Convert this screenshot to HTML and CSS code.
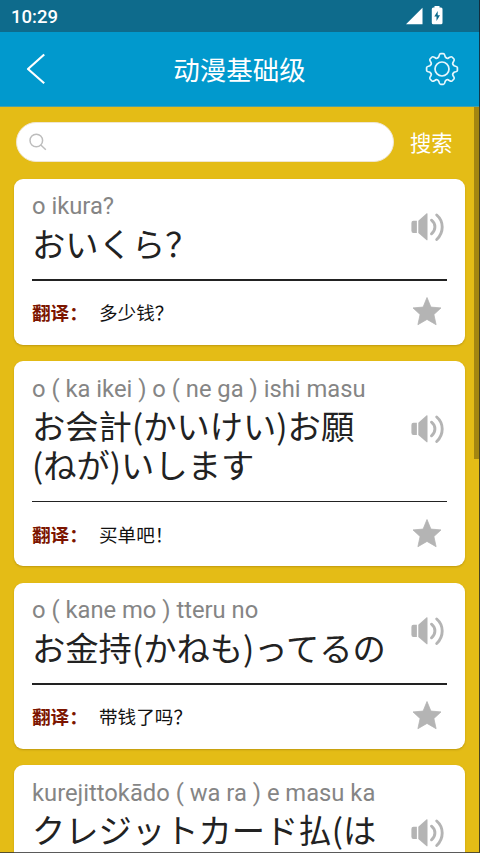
FILE: index.html
```
<!DOCTYPE html>
<html lang="zh-CN">
<head>
<meta charset="utf-8">
<title>动漫基础级</title>
<link rel="stylesheet" href="styles.css">
</head>
<body>
<svg width="0" height="0" class="defs">
  <symbol id="speaker" viewBox="0 0 34 30">
    <path d="M2.400 8.700H5.900V21H2.400Q.4 21 .4 18.800V10.900Q.4 8.700 2.400 8.700Z" fill="#b4b4b4"/>
    <path d="M7.300 8.700L15.700 1.300Q16.500 .9 16.500 1.800V27.700Q16.500 28.600 15.700 28.200L7.300 21Z" fill="#b4b4b4"/>
    <path d="M20.500 8.200Q23.900 10.800 23.900 15T20.500 21.800M25.700 3Q31.200 7.700 31.200 15T25.700 27.500" fill="none" stroke="#b4b4b4" stroke-width="2.900" stroke-linecap="round"/>
  </symbol>
  <symbol id="star" viewBox="0 0 30 30">
    <path d="M15 1.500L18.900 11.100L29 11.900L21.900 18.500L24.100 28.700L15 23.400L5.900 28.700L8.100 18.500L1 11.900L11.100 11.100Z" fill="#b4b4b4" stroke="#b4b4b4" stroke-width=".8" stroke-linejoin="round"/>
  </symbol>
</svg>
<div class="screen">
  <div class="status">
    <span class="clock">10:29</span>
    <svg class="status-icons" width="38" height="20" viewBox="0 0 38 20">
      <path d="M0 18.200L16.500 1.700V18.200Z" fill="#fff"/>
      <path d="M28.500 0H33.500V1.500H35Q36.500 1.500 36.500 3V16.700Q36.500 18.200 35 18.200H27.300Q25.800 18.200 25.800 16.700V3Q25.800 1.500 27.300 1.500H28.500Z" fill="#fff"/>
      <path d="M31.700 5L28.300 10.600H30.500V15L34 9.200H31.700Z" fill="#0e6b8c"/>
    </svg>
  </div>
  <header class="header">
    <svg class="back" width="20" height="32" viewBox="0 0 20 32"><path d="M18.200 1.500L2 16L18.200 30.300" fill="none" stroke="#fff" stroke-width="2.200" stroke-linejoin="round"/></svg>
    <h1 class="title">动漫基础级</h1>
    <svg class="gear" width="34" height="34" viewBox="-17 -17 34 34" fill="none" stroke="#e6f6fc" stroke-width="1.700" stroke-linejoin="round">
      <circle r="7"/>
      <path d="M-3.200-12.200C-2.700-14.300-2.600-15.400-1.400-15.400H1.400C2.600-15.400 2.700-14.300 3.200-12.200C4.200-10.700 5.500-10.500 6.400-10.900C8.200-12 9.100-12.900 10-12L12-10C12.900-9.100 12-8.200 10.900-6.400C10.500-5.500 10.700-4.200 12.200-3.200C14.300-2.700 15.400-2.600 15.400-1.400V1.400C15.400 2.600 14.300 2.700 12.200 3.200C10.700 4.200 10.500 5.500 10.900 6.400C12 8.200 12.900 9.100 12 10L10 12C9.100 12.900 8.200 12 6.400 10.900C5.500 10.500 4.200 10.700 3.200 12.200C2.700 14.300 2.600 15.400 1.400 15.400H-1.400C-2.600 15.400-2.700 14.300-3.200 12.200C-4.200 10.700-5.500 10.500-6.400 10.900C-8.200 12-9.100 12.900-10 12L-12 10C-12.900 9.100-12 8.200-10.900 6.400C-10.500 5.500-10.700 4.200-12.200 3.200C-14.300 2.700-15.400 2.600-15.400 1.400V-1.400C-15.400-2.600-14.300-2.700-12.200-3.200C-10.700-4.200-10.500-5.500-10.900-6.400C-12-8.200-12.900-9.100-12-10L-10-12C-9.100-12.900-8.200-12-6.400-10.900C-5.500-10.500-4.200-10.700-3.200-12.200Z"/>
    </svg>
  </header>
  <main class="content">
    <div class="search">
      <div class="search-box">
        <svg width="18" height="18" viewBox="0 0 18 18" fill="none" stroke="#bdbdbd" stroke-width="1.500"><circle cx="7.300" cy="7.500" r="6.300"/><path d="M11.800 12L16.800 16.700"/></svg>
      </div>
      <span class="search-label">搜索</span>
    </div>
    <div class="cards">
      <article class="card">
        <div class="phrase">
          <div class="words"><p class="romaji">o ikura?</p><p class="japanese">おいくら？</p></div>
          <svg class="speaker"><use href="#speaker"/></svg>
        </div>
        <div class="meaning"><b class="label">翻译：</b><span class="chinese">多少钱？</span><svg class="star"><use href="#star"/></svg></div>
      </article>
      <article class="card">
        <div class="phrase thin">
          <div class="words"><p class="romaji">o ( ka ikei ) o ( ne ga ) ishi masu</p><p class="japanese">お会計(かいけい)お願<br>(ねが)いします</p></div>
          <svg class="speaker"><use href="#speaker"/></svg>
        </div>
        <div class="meaning"><b class="label">翻译：</b><span class="chinese">买单吧！</span><svg class="star"><use href="#star"/></svg></div>
      </article>
      <article class="card">
        <div class="phrase">
          <div class="words"><p class="romaji">o ( kane mo ) tteru no</p><p class="japanese">お金持(かねも)ってるの</p></div>
          <svg class="speaker"><use href="#speaker"/></svg>
        </div>
        <div class="meaning"><b class="label">翻译：</b><span class="chinese">带钱了吗？</span><svg class="star"><use href="#star"/></svg></div>
      </article>
      <article class="card">
        <div class="phrase two-line">
          <div class="words"><p class="romaji">kurejittokādo ( wa ra ) e masu ka</p><p class="japanese">クレジットカード払(は</p></div>
          <svg class="speaker"><use href="#speaker"/></svg>
        </div>
      </article>
    </div>
    <div class="scrollbar"></div>
  </main>
  <div class="edge"></div>
</div>
</body>
</html>
```

FILE: styles.css
```
* { box-sizing: border-box; }
html, body { height: 100%; overflow: hidden; }
body { margin: 0; font-family: "Noto Sans CJK SC", sans-serif; }
p, h1 { margin: 0; }
.defs { position: absolute; }

.screen {
  position: relative;
  display: flex;
  flex-direction: column;
  width: 480px;
  height: 853px;
  overflow: hidden;
}
.edge {
  position: absolute;
  inset: 0;
  border-right: 1px solid rgba(20, 25, 35, .75);
  border-bottom: 1px solid rgba(50, 50, 50, .8);
}

.status {
  display: flex;
  flex: none;
  align-items: center;
  justify-content: space-between;
  height: 32px;
  padding: 0 36.500px 0 11px;
  background: #0e6b8c;
}
.clock { color: #fff; font: 500 18.500px/32px Roboto, sans-serif; padding-top: 1px; }

.header {
  display: flex;
  flex: none;
  align-items: center;
  justify-content: space-between;
  height: 75px;
  padding: 0 21.500px 0 26px;
  background: #0199cd;
  border-bottom: 1px solid #4a9fa5;
}
.title { color: #fff; font-size: 26.500px; font-weight: 400; line-height: 40px; padding-left: 8.500px; }

.content {
  position: relative;
  flex: 1;
  min-height: 0;
  overflow: hidden;
  padding: 15px 15px 0 14px;
  background: #e4bc16;
}
.search { display: flex; align-items: center; height: 40px; padding-left: 2px; }
.search-box {
  display: flex;
  align-items: center;
  width: 378px;
  height: 40px;
  padding-left: 12px;
  background: #fff;
  border-radius: 20px;
  border: 1px solid #f0e6d0;
}
.search-label { margin-left: 16px; color: #fff; font-size: 21.300px; line-height: 30px; }

.cards { display: flex; flex-direction: column; gap: 16.500px; padding-top: 16.600px; }
.card {
  background: #fff;
  border-radius: 9px;
  padding: 0 18px;
  box-shadow: 0 1px 2px rgba(120, 90, 0, .35);
}
.phrase {
  display: flex;
  align-items: center;
  justify-content: space-between;
  height: 102px;
  padding: 0 2.500px 4px 0;
  border-bottom: 2px solid #222;
}
.phrase.thin { height: 141px; border-bottom-width: 1px; }
.phrase.two-line { height: 141px; }
.words { align-self: flex-start; padding-top: 13.500px; white-space: nowrap; }
.romaji { color: #858585; font: 23.750px/28px Roboto, sans-serif; }
.japanese { color: #222; font-size: 33.300px; line-height: 39.200px; padding-top: 2.700px; }
.speaker { width: 34px; height: 30px; flex: none; }
.meaning { display: flex; align-items: center; height: 64px; padding-bottom: 1px; }
.label { width: 67px; color: #7c1500; font-size: 18.600px; line-height: 28px; }
.chinese { flex: 1; color: #111; font-size: 18.600px; line-height: 28px; }
.star { width: 30px; height: 30px; margin-right: 5px; margin-bottom: 2px; }

.scrollbar {
  position: absolute;
  top: 0;
  right: 1px;
  width: 5px;
  height: 352px;
  background: #a48611;
}
```
